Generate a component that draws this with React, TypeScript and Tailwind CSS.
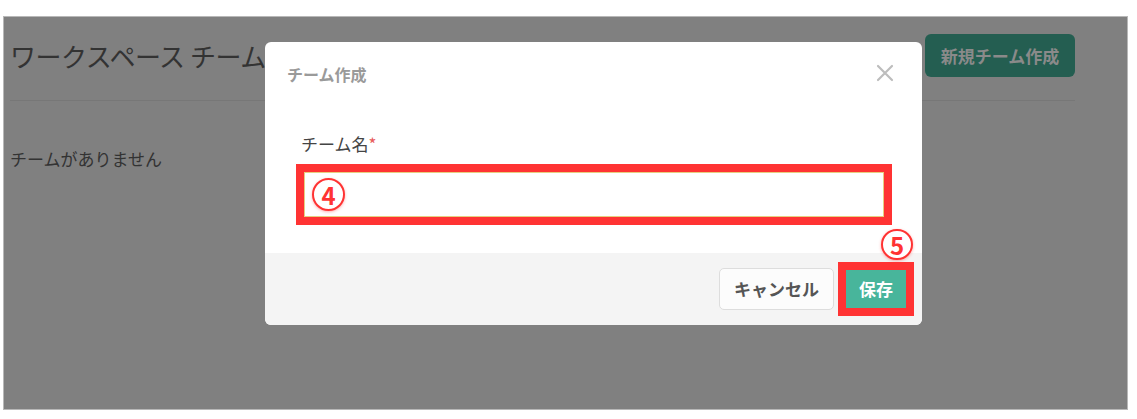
import React from "react";

const jp = { fontFamily: '"Noto Sans CJK JP", "Noto Sans", sans-serif' };

function Circled({ n, className }: { n: string; className?: string }) {
  return (
    <div
      className={
        "flex items-center justify-center rounded-full border-2 border-[#ff3333] bg-white text-[#ff3333] font-semibold shadow-[0_1px_3px_rgba(255,80,80,0.45)] " +
        (className ?? "")
      }
      style={jp}
    >
      <span className="leading-none">{n}</span>
    </div>
  );
}

export default function App() {
  return (
    <div className="w-[1137px] h-[419px] bg-white pt-[16px] pl-[3px]" style={jp}>
      <div className="relative w-[1125px] h-[394px] bg-[#808080] border border-[#b8b8b8]">
        {/* underlying page */}
        <div className="pl-[6px] pr-[52px] pt-[17px]">
          <div className="flex items-center justify-between">
            <div className="text-[26px] font-normal text-[#333333] leading-[34px] tracking-[-0.5px]">
              ワークスペース チーム
            </div>
            <div className="w-[150px] h-[43px] rounded-[6px] bg-[#245e51] flex items-center justify-center text-[17px] font-bold text-[#8a8a8a]">
              新規チーム作成
            </div>
          </div>
          <div className="mt-[23px] border-t border-[#777777]" />
          <div className="mt-[46px] text-[17px] text-[#333333] leading-[24px]">チームがありません</div>
        </div>

        {/* modal */}
        <div className="absolute left-[261px] top-[25px] w-[657px] h-[283px] rounded-[6px] bg-white flex flex-col overflow-visible">
          <div className="flex items-center justify-between pl-[22px] pr-[28px] pt-[22px] h-[42px]">
            <div className="text-[16px] font-bold text-[#9a9a9a] leading-[20px]">チーム作成</div>
            <svg width="18" height="18" viewBox="0 0 18 18" className="-mt-[2px]">
              <path d="M2 2 L16 16 M16 2 L2 16" stroke="#bdbdbd" strokeWidth="2.2" strokeLinecap="round" />
            </svg>
          </div>
          <div className="pl-[31px] pt-[48px] flex-1">
            <div className="pl-[5px] text-[17px] text-[#444444] leading-[24px]">
              チーム名<span className="text-[#e85a5a]">*</span>
            </div>
            <div className="mt-[8px] w-[596px] h-[61px] border-[8px] border-[#ff3333]">
              <div className="w-full h-full border-[1.5px] border-[#e6cf80] bg-white flex items-center pl-[7px]">
                <Circled n="4" className="w-[33px] h-[33px] text-[24px]" />
              </div>
            </div>
          </div>
          <div className="h-[72px] bg-[#f4f4f4] rounded-b-[6px] flex items-center justify-end pr-[8px] gap-[4px]">
            <div className="w-[115px] h-[42px] rounded-[5px] border border-[#dddddd] bg-[#fcfcfc] flex items-center justify-center text-[17px] font-bold text-[#555555]">
              キャンセル
            </div>
            <div className="w-[76px] h-[54px] border-[8px] border-[#ff3333] bg-[#ff3333]">
              <div className="w-full h-full bg-[#48b59b] flex items-center justify-center text-[17px] font-bold text-white">
                保存
              </div>
            </div>
          </div>
          <Circled n="5" className="absolute left-[616px] top-[187px] w-[32px] h-[31px] text-[24px]" />
        </div>
      </div>
    </div>
  );
}
